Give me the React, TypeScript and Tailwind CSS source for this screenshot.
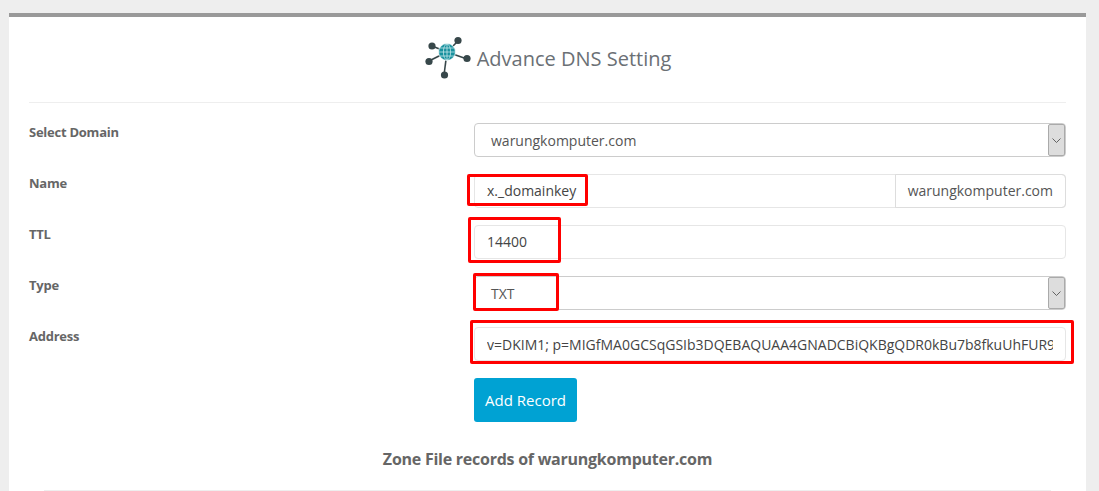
const font = "font-['Open_Sans',sans-serif]";

function NetworkIcon() {
  return (
    <svg width="48" height="44" viewBox="0 0 48 44" className="shrink-0">
      <g stroke="#37474a" strokeWidth="1.6">
        <line x1="22" y1="16" x2="7" y2="10" />
        <line x1="22" y1="16" x2="33" y2="5" />
        <line x1="22" y1="16" x2="42" y2="23" />
        <line x1="22" y1="16" x2="4" y2="25" />
        <line x1="22" y1="16" x2="19" y2="39" />
      </g>
      <g fill="#37474a">
        <circle cx="7" cy="10" r="3.6" />
        <circle cx="33" cy="4.5" r="3.6" />
        <circle cx="42" cy="22.5" r="3.6" />
        <circle cx="4" cy="25.5" r="3.6" />
        <circle cx="19.5" cy="39" r="3.6" />
      </g>
      <circle cx="22" cy="16" r="8.5" fill="#17919e" stroke="#fff" strokeWidth="0.8" />
      <g fill="none" stroke="#d5eef0" strokeWidth="0.7">
        <ellipse cx="22" cy="16" rx="3.6" ry="8" />
        <line x1="22" y1="8" x2="22" y2="24" />
        <line x1="14" y1="16" x2="30" y2="16" />
        <line x1="15" y1="12" x2="29" y2="12" />
        <line x1="15" y1="20" x2="29" y2="20" />
      </g>
    </svg>
  );
}

function Row({ label, children }: { label: string; children: React.ReactNode }) {
  return (
    <div className="flex h-[34px]">
      <div className="w-[445px] shrink-0 text-[13px] font-bold leading-[18px] tracking-[-0.25px] text-[#666]">{label}</div>
      <div className="relative flex-1">{children}</div>
    </div>
  );
}

function SelectBox({ value }: { value: string }) {
  return (
    <div className="flex h-[34px] items-stretch rounded-[4px] border border-[#ccc] bg-white">
      <div className="flex-1 pl-[16px] text-[14px] leading-[33px] text-[#555]">{value}</div>
      <div className="flex w-[17px] items-center justify-center rounded-[2px] border border-[#aaa] bg-[#ddd]">
        <svg width="9" height="5" viewBox="0 0 9 5" fill="none" stroke="#555" strokeWidth="0.9">
          <path d="M0.5 0.5 L4.5 4.5 L8.5 0.5" />
        </svg>
      </div>
    </div>
  );
}

function RedBox({ className }: { className: string }) {
  return <div className={`pointer-events-none absolute rounded-[2px] border-[3px] border-[#f00] ${className}`} />;
}

export default function App() {
  return (
    <div className={`h-[491px] w-[1099px] overflow-hidden bg-[#eee] pt-[13px] pl-[9px] ${font}`}>
      <div className="h-[478px] w-[1077px] border-t-4 border-[#999] bg-white px-[20px]">
        <div className="flex h-[86px] items-start justify-center border-b border-[#eee] pt-[19px] pl-[1px]">
          <NetworkIcon />
          <span className="mt-[9px] ml-[4px] text-[20px] leading-[28px] text-[#6b7075]">Advance DNS Setting</span>
        </div>

        <div className="mt-[20px] flex flex-col gap-[17px]">
          <Row label="Select Domain">
            <SelectBox value="warungkomputer.com" />
          </Row>

          <Row label="Name">
            <div className="flex h-[34px] rounded-[4px] border border-[#e6e6e6]">
              <div className="flex-1 pl-[12px] text-[14px] leading-[32px] text-[#444]">x._domainkey</div>
              <div className="rounded-r-[4px] border border-[#ddd] -m-px pl-[12px] pr-[12px] text-[14px] leading-[32px] text-[#555]">
                warungkomputer.com
              </div>
            </div>
            <RedBox className="-left-[7px] top-0 h-[32px] w-[121px]" />
          </Row>

          <Row label="TTL">
            <div className="h-[34px] rounded-[4px] border border-[#e6e6e6] pl-[12px] text-[14px] leading-[32px] text-[#444]">
              14400
            </div>
            <RedBox className="-left-[6px] -top-[8px] h-[46px] w-[93px]" />
          </Row>

          <Row label="Type">
            <SelectBox value="TXT" />
            <RedBox className="-left-px -top-[3px] h-[38px] w-[86px]" />
          </Row>

          <Row label="Address">
            <input
              readOnly
              value="v=DKIM1; p=MIGfMA0GCSqGSIb3DQEBAQUAA4GNADCBiQKBgQDR0kBu7b8fkuUhFUR9xT2mLq"
              className="h-[34px] w-full rounded-[4px] border border-[#e6e6e6] px-[12px] text-[14px] text-[#444] outline-none"
            />
            <RedBox className="-left-[4px] -top-[7px] h-[44px] -right-[8px]" />
          </Row>
        </div>

        <div className="mt-[17px] pl-[445px]">
          <button className="h-[44px] w-[103px] rounded-[3px] bg-[#00a2d3] text-[15px] text-white">Add Record</button>
        </div>

        <h3 className="mt-[26px] text-center text-[16px] font-bold leading-[22px] tracking-[-0.25px] text-[#666]">
          Zone File records of warungkomputer.com
        </h3>
        <div className="mx-[15px] mt-[20px] border-t border-[#eee]" />
      </div>
    </div>
  );
}
